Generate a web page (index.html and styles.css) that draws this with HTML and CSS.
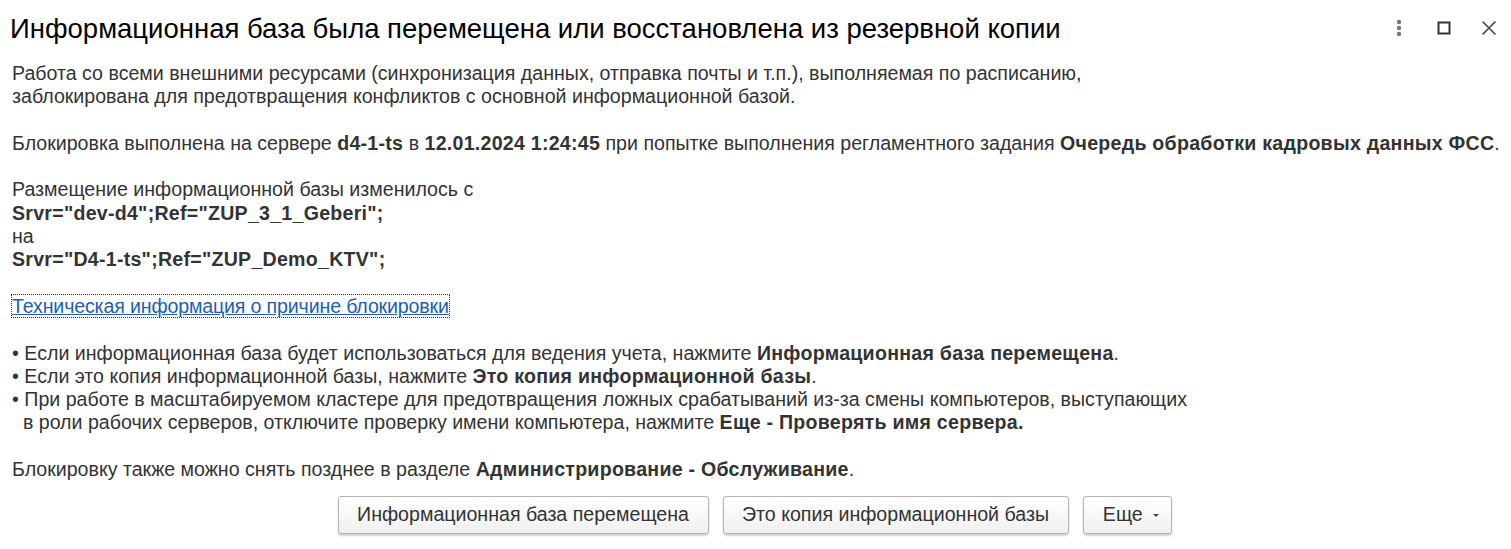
FILE: index.html
```html
<!DOCTYPE html>
<html lang="ru">
<head>
<meta charset="utf-8">
<title>Информационная база</title>
<link rel="stylesheet" href="styles.css">
</head>
<body>
<div class="window">
  <header class="titlebar">
    <h1 class="title">Информационная база была перемещена или восстановлена из резервной копии</h1>
    <div class="controls">
      <span class="ctl"><svg width="12" height="20" viewBox="0 0 12 20"><circle cx="6" cy="4" r="2.2" fill="#777"/><circle cx="6" cy="10" r="2.2" fill="#777"/><circle cx="6" cy="16" r="2.2" fill="#777"/></svg></span>
      <span class="ctl"><svg width="14" height="14" viewBox="0 0 14 14"><rect x="1.5" y="1.5" width="11" height="11" fill="none" stroke="#333" stroke-width="2"/></svg></span>
      <span class="ctl"><svg width="16" height="16" viewBox="0 0 16 16"><path d="M1.5 1.5 L14.5 14.5 M14.5 1.5 L1.5 14.5" stroke="#444" stroke-width="1.6"/></svg></span>
    </div>
  </header>
  <main class="content">
    <p>Работа со всеми внешними ресурсами (синхронизация данных, отправка почты и т.п.), выполняемая по расписанию,<br>заблокирована для предотвращения конфликтов с основной информационной базой.</p>
    <p>Блокировка выполнена на сервере <b>d4-1-ts</b> в <b>12.01.2024 1:24:45</b> при попытке выполнения регламентного задания <b>Очередь обработки кадровых данных ФСС</b>.</p>
    <p>Размещение информационной базы изменилось с<br><b>Srvr="dev-d4";Ref="ZUP_3_1_Geberi";</b><br>на<br><b>Srvr="D4-1-ts";Ref="ZUP_Demo_KTV";</b></p>
    <p><a class="link" href="#">Техническая информация о причине блокировки</a></p>
    <p>• Если информационная база будет использоваться для ведения учета, нажмите <b>Информационная база перемещена</b>.<br>• Если это копия информационной базы, нажмите <b>Это копия информационной базы</b>.<br>• При работе в масштабируемом кластере для предотвращения ложных срабатываний из-за смены компьютеров, выступающих<br>&nbsp;&nbsp;в роли рабочих серверов, отключите проверку имени компьютера, нажмите <b>Еще - Проверять имя сервера.</b></p>
    <p>Блокировку также можно снять позднее в разделе <b>Администрирование - Обслуживание</b>.</p>
  </main>
  <footer class="buttons">
    <button class="btn btn-1">Информационная база перемещена</button>
    <button class="btn btn-2">Это копия информационной базы</button>
    <button class="btn btn-3">Еще <span class="caret"></span></button>
  </footer>
</div>
</body>
</html>
```
FILE: styles.css
```css
html, body {
  margin: 0;
  padding: 0;
  background: #fff;
}
body {
  font-family: "Liberation Sans", Arial, sans-serif;
  color: #333;
}
.window {
  width: 1511px;
  height: 549px;
  overflow: hidden;
}
.titlebar {
  display: flex;
  align-items: center;
  height: 58px;
  padding: 0 0 0 10px;
}
.title {
  flex: 1;
  margin: 0;
  font-weight: normal;
  font-size: 27.5px;
  color: #000;
}
.controls {
  display: flex;
  align-items: center;
  margin-top: -2px;
}
.ctl {
  width: 45px;
  display: flex;
  justify-content: center;
  align-items: center;
}
.content {
  padding: 4px 8px 0 12px;
  font-size: 19.6px;
  line-height: 23.3px;
}
.content p {
  margin: 0 0 23.3px;
  white-space: nowrap;
}
.content b {
  letter-spacing: 0.25px;
}
.link {
  color: #1d5eb7;
  text-decoration: underline;
  outline: 1px dotted #333;
  outline-offset: 0;
  letter-spacing: -0.15px;
}
.buttons {
  display: flex;
  justify-content: center;
  gap: 14px;
  margin-top: -9px;
  padding-right: 2px;
}
.btn {
  font-family: "Liberation Sans", Arial, sans-serif;
  font-size: 19.6px;
  color: #333;
  height: 38px;
  border: 1px solid #b4b4b4;
  border-radius: 3px;
  background: linear-gradient(#ffffff, #f0f0f0);
  box-shadow: 0 2px 2px rgba(0,0,0,0.18);
  padding: 0;
}
.btn-1 { width: 371px; }
.btn-2 { width: 346px; }
.btn-3 { width: 89px; padding-left: 8px; }
.caret {
  display: inline-block;
  width: 0;
  height: 0;
  border-left: 3.5px solid transparent;
  border-right: 3.5px solid transparent;
  border-top: 3.5px solid #444;
  vertical-align: middle;
  margin-left: 5px;
}
```
